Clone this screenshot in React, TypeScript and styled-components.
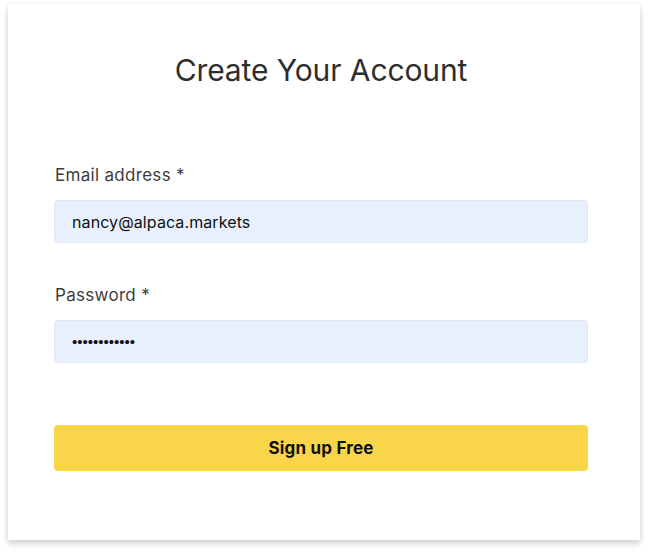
import React from "react";
import styled, { createGlobalStyle } from "styled-components";

const Global = createGlobalStyle`
  html, body { margin: 0; padding: 0; background: #ffffff; }
  body { font-family: Inter, "Noto Sans", sans-serif; }
  * { box-sizing: border-box; }
`;

const Page = styled.div`
  padding: 4px 8px 12px 8px;
`;

const Card = styled.form`
  width: 632px;
  height: 536px;
  background: #ffffff;
  box-shadow: 0 4px 6px rgba(0, 0, 0, 0.16), 0 0 5px rgba(0, 0, 0, 0.07);
  padding: 48px 52px 0 46px;
  display: flex;
  flex-direction: column;
`;

const Title = styled.h1`
  margin: 0 0 77px 0;
  font-size: 30px;
  line-height: 36px;
  font-weight: 400;
  color: #2e2e2e;
  text-align: center;
  letter-spacing: -0.1px;
`;

const Field = styled.div<{ $gap: number }>`
  display: flex;
  flex-direction: column;
  gap: 15px;
  margin-bottom: ${(p) => p.$gap}px;
`;

const Label = styled.label`
  font-size: 17px;
  line-height: 20px;
  letter-spacing: 0.3px;
  color: #3d3d3d;
  padding-left: 1px;
`;

const Input = styled.input<{ $secret?: boolean }>`
  height: 43px;
  width: 100%;
  border: 1px solid #dfe6f3;
  border-radius: 4px;
  background: #e8f0fe;
  padding: 0 17px;
  font-family: ${(p) => (p.$secret ? '"Liberation Sans", Arial, sans-serif' : 'Inter, "Noto Sans", sans-serif')};
  font-size: ${(p) => (p.$secret ? "15px" : "16px")};
  letter-spacing: ${(p) => (p.$secret ? "0" : "0.1px")};
  color: #111;
  outline: none;
`;

const Button = styled.button`
  height: 46px;
  width: 100%;
  border: none;
  border-radius: 4px;
  background: #f8d549;
  font-family: Inter, "Noto Sans", sans-serif;
  font-size: 17px;
  font-weight: 700;
  letter-spacing: 0.2px;
  color: #111;
  cursor: pointer;
`;

export default function App() {
  return (
    <Page>
      <Global />
      <Card onSubmit={(e) => e.preventDefault()}>
        <Title>Create Your Account</Title>
        <Field $gap={42}>
          <Label>Email address *</Label>
          <Input type="email" defaultValue="nancy@alpaca.markets" readOnly />
        </Field>
        <Field $gap={62}>
          <Label>Password *</Label>
          <Input $secret type="password" defaultValue="abcdefghijkl" readOnly />
        </Field>
        <Button type="submit">Sign up Free</Button>
      </Card>
    </Page>
  );
}
